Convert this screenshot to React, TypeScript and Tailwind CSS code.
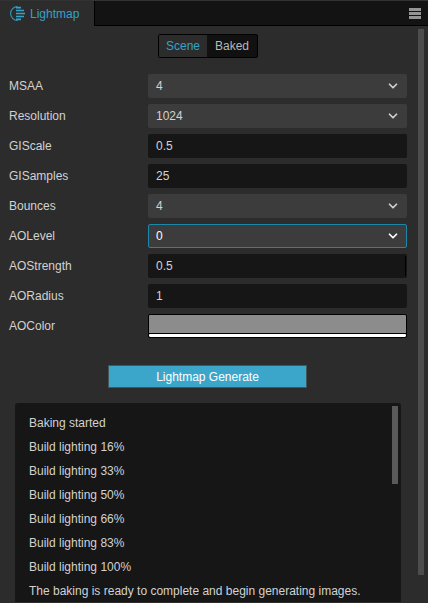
import { ChevronDown } from 'lucide-react';

const font = 'font-["Liberation_Sans",Arial,sans-serif]';

function Etiqueta({ texto }: { texto: string }) {
  return <span className="w-[139px] shrink-0 text-[12px] text-[#d2d2d2]">{texto}</span>;
}

function Selector({ texto, activo }: { texto: string; activo?: boolean }) {
  return (
    <div
      className={`flex h-6 flex-1 items-center justify-between rounded-[2px] bg-[#3c3c3c] text-[12px] ${
        activo ? 'border border-[#1d87a8] pl-[7px] pr-[6px] text-white' : 'pl-2 pr-[7px] text-[#d2d2d2]'
      }`}
    >
      <span>{texto}</span>
      <ChevronDown size={14} strokeWidth={3} className={activo ? 'text-white' : 'text-[#d0d0d0]'} />
    </div>
  );
}

function Entrada({ texto, cursor }: { texto: string; cursor?: boolean }) {
  return (
    <div className="flex h-6 flex-1 items-center justify-between rounded-[2px] bg-[#161616] pl-2 pr-[1px] text-[12px] text-[#d2d2d2]">
      <span>{texto}</span>
      {cursor && <span className="h-5 w-px bg-black" />}
    </div>
  );
}

const filas: { etiqueta: string; tipo: 'select' | 'input'; valor: string; activo?: boolean; cursor?: boolean }[] = [
  { etiqueta: 'MSAA', tipo: 'select', valor: '4' },
  { etiqueta: 'Resolution', tipo: 'select', valor: '1024' },
  { etiqueta: 'GIScale', tipo: 'input', valor: '0.5' },
  { etiqueta: 'GISamples', tipo: 'input', valor: '25' },
  { etiqueta: 'Bounces', tipo: 'select', valor: '4' },
  { etiqueta: 'AOLevel', tipo: 'select', valor: '0', activo: true },
  { etiqueta: 'AOStrength', tipo: 'input', valor: '0.5', cursor: true },
  { etiqueta: 'AORadius', tipo: 'input', valor: '1' },
];

const registro = [
  'Baking started',
  'Build lighting 16%',
  'Build lighting 33%',
  'Build lighting 50%',
  'Build lighting 66%',
  'Build lighting 83%',
  'Build lighting 100%',
  'The baking is ready to complete and begin generating images.',
];

export default function App() {
  return (
    <div className={`flex h-[603px] w-[428px] flex-col overflow-hidden bg-[#2c2c2c] ${font}`}>
      {/* Pestañas */}
      <div className="flex h-[26px] shrink-0 border-t border-[#333333] bg-[#131313]">
        <div className="flex w-[94px] items-center gap-[5px] bg-[#2c2c2c] pl-[10px] text-[12px] text-[#35a2c9]">
          <svg width="15" height="15" viewBox="0 0 15 15" fill="none">
            <path d="M7.5 0.6A6.9 6.9 0 1 0 7.5 14.4" stroke="#2f93b6" strokeWidth="1.2" />
            <path d="M6 1.6H11M6 4.5H14M6 7.5H15M6 10.5H14M6 13.4H11" stroke="#35a2c9" strokeWidth="1.7" />
          </svg>
          Lightmap
        </div>
        <div className="flex-1 border-b border-l border-black" />
        <div className="flex w-[19px] flex-col items-start justify-center gap-[1px] border-b border-black">
          <span className="h-[3px] w-[12px] bg-[#959595]" />
          <span className="h-[3px] w-[12px] bg-[#959595]" />
          <span className="h-[3px] w-[12px] bg-[#959595]" />
        </div>
      </div>

      <div className="flex min-h-0 flex-1">
        <div className="w-[418px] shrink-0">
          {/* Scene / Baked */}
          <div className="ml-[158px] mt-[8px] flex h-6 w-[100px] rounded-[2px] border border-black bg-[#111111] text-[12px]">
            <span className="flex w-[48px] items-center justify-center bg-[#2c2c2c] text-[#35a2c9]">Scene</span>
            <span className="flex flex-1 items-center justify-center text-[#b8b8b8]">Baked</span>
          </div>

          {/* Propiedades */}
          <div className="mt-4 flex flex-col gap-[6px] pl-[9px] pr-[11px]">
            {filas.map((f) => (
              <div key={f.etiqueta} className="flex items-center">
                <Etiqueta texto={f.etiqueta} />
                {f.tipo === 'select' ? (
                  <Selector texto={f.valor} activo={f.activo} />
                ) : (
                  <Entrada texto={f.valor} cursor={f.cursor} />
                )}
              </div>
            ))}
            <div className="flex items-center">
              <Etiqueta texto="AOColor" />
              <div className="flex h-6 flex-1 flex-col overflow-hidden rounded-[2px] border border-black bg-black">
                <div className="flex-1 bg-[#8c8c8c]" />
                <div className="mt-px h-[3px] rounded-[1px] bg-white" />
              </div>
            </div>
          </div>

          <div className="ml-[108px] mt-[27px] flex h-[23px] w-[199px] items-center justify-center border border-[#44555c] bg-[#3ca6ca] text-[12px] text-white">
            Lightmap Generate
          </div>

          {/* Registro */}
          <div className="relative ml-[15px] mt-[15px] h-[199px] w-[386px] rounded-t-[3px] bg-[#161616] pl-[14px] pt-[8px] text-[12px] text-[#d2d2d2]">
            {registro.map((l) => (
              <div key={l} className="flex h-6 items-center">{l}</div>
            ))}
            <div className="absolute right-[3px] top-[3px] h-[78px] w-[6px] bg-[#5a5a5a]" />
          </div>
        </div>

        <div className="mt-[3px] h-[546px] w-[6px] bg-[#4d4d4d]" />
      </div>
    </div>
  );
}
